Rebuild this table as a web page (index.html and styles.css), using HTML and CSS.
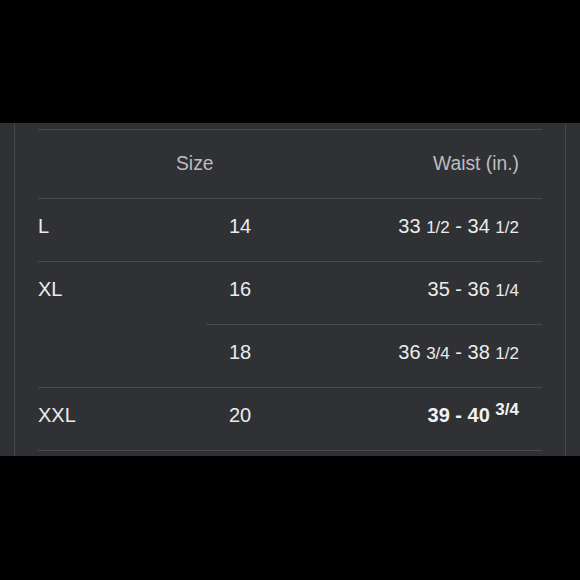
FILE: index.html
```html
<!DOCTYPE html>
<html lang="en">
<head>
<meta charset="utf-8">
<title>Size chart</title>
<link rel="stylesheet" href="styles.css">
</head>
<body>
<div class="top"></div>
<section class="panel">
  <div class="frame">
    <div class="table">
      <div class="cell head head-size">Size</div>
      <div class="cell head head-waist">Waist (in.)</div>

      <div class="cell label">L</div>
      <div class="cell num">14</div>
      <div class="cell waist">33 <span class="frac">1/2</span> - 34 <span class="frac">1/2</span></div>

      <div class="cell label span2">XL</div>
      <div class="cell num">16</div>
      <div class="cell waist">35 - 36 <span class="frac">1/4</span></div>
      <div class="cell num">18</div>
      <div class="cell waist">36 <span class="frac">3/4</span> - 38 <span class="frac">1/2</span></div>

      <div class="cell label">XXL</div>
      <div class="cell num">20</div>
      <div class="cell waist bold">39 - 40 <span class="frac sup">3/4</span></div>
    </div>
  </div>
</section>
</body>
</html>
```

FILE: styles.css
```css
html, body {
  margin: 0;
  padding: 0;
  background: #000;
}
body {
  width: 580px;
  height: 580px;
  font-family: "Liberation Sans", Arial, Helvetica, sans-serif;
  color: #ebebeb;
}
.top {
  height: 123px;
}
.panel {
  height: 333px;
  background: #303135;
}
.frame {
  box-sizing: border-box;
  height: 100%;
  margin: 0 14px;
  border-left: 1px solid #46474b;
  border-right: 1px solid #46474b;
  padding: 6px 23px 0;
}
.table {
  display: grid;
  grid-template-columns: 168px 1fr 1fr;
  border-top: 1px solid #4a4b4f;
}
.cell {
  box-sizing: border-box;
  height: 63px;
  padding-top: 16px;
  border-bottom: 1px solid #4a4b4f;
  font-size: 20px;
  line-height: 22px;
  white-space: nowrap;
}
.head {
  height: 69px;
  padding-top: 23px;
  font-size: 19.3px;
  color: #bdbdc1;
}
.head-size {
  grid-column: 1 / 3;
  padding-left: 138px;
}
.head-waist {
  text-align: right;
  padding-right: 23px;
}
.label {
  padding-left: 0;
}
.span2 {
  grid-row: span 2;
  height: 126px;
}
.num {
  padding-left: 23px;
}
.waist {
  text-align: right;
  padding-right: 23px;
}
.frac {
  font-size: 17px;
}
.bold {
  font-weight: bold;
  color: #f2f2f2;
}
.sup {
  vertical-align: 7px;
  line-height: 0;
}
```
